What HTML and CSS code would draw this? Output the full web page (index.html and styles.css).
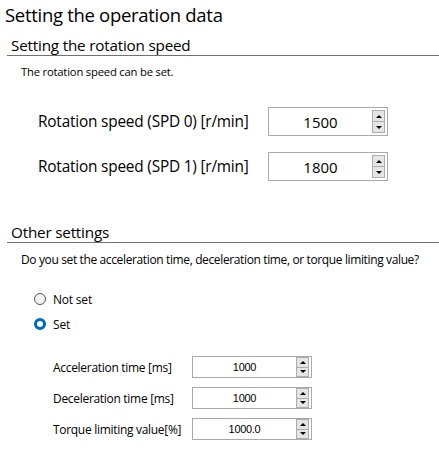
FILE: index.html
```html
<!DOCTYPE html>
<html>
<head>
<meta charset="utf-8">
<link rel="stylesheet" href="styles.css">
</head>
<body>
<div class="page">
  <h1 class="title">Setting the operation data</h1>

  <section class="group">
    <h2 class="group-title">Setting the rotation speed</h2>
    <p class="desc">The rotation speed can be set.</p>
    <div class="speed-grid">
      <span class="speed-label">Rotation speed (SPD 0) [r/min]</span>
      <div class="spin spin-lg">
        <span class="spin-value">1500</span>
        <span class="spin-btns"><span class="spin-btn up"></span><span class="spin-btn down"></span></span>
      </div>
      <span class="speed-label">Rotation speed (SPD 1) [r/min]</span>
      <div class="spin spin-lg">
        <span class="spin-value">1800</span>
        <span class="spin-btns"><span class="spin-btn up"></span><span class="spin-btn down"></span></span>
      </div>
    </div>
  </section>

  <section class="group group-other">
    <h2 class="group-title">Other settings</h2>
    <p class="question">Do you set the acceleration time, deceleration time, or torque limiting value?</p>
    <div class="radios">
      <label class="radio"><span class="radio-dot"></span>Not set</label>
      <label class="radio"><span class="radio-dot checked"></span>Set</label>
    </div>
    <div class="detail-grid">
      <span class="detail-label">Acceleration time [ms]</span>
      <div class="spin spin-sm">
        <span class="spin-value">1000</span>
        <span class="spin-btns"><span class="spin-btn up"></span><span class="spin-btn down"></span></span>
      </div>
      <span class="detail-label">Deceleration time [ms]</span>
      <div class="spin spin-sm">
        <span class="spin-value">1000</span>
        <span class="spin-btns"><span class="spin-btn up"></span><span class="spin-btn down"></span></span>
      </div>
      <span class="detail-label">Torque limiting value[%]</span>
      <div class="spin spin-sm">
        <span class="spin-value">1000.0</span>
        <span class="spin-btns"><span class="spin-btn up"></span><span class="spin-btn down"></span></span>
      </div>
    </div>
  </section>
</div>
</body>
</html>
```

FILE: styles.css
```css
* { box-sizing: border-box; }
html, body { margin: 0; padding: 0; background: #fff; }
body {
  font-family: "Open Sans", "Noto Sans", sans-serif;
  color: #000;
  width: 439px;
  height: 469px;
  overflow: hidden;
}
.page { padding: 0; }

.title {
  margin: 0;
  padding: 3px 0 0 5px;
  height: 28px;
  font-size: 18.5px;
  font-weight: 400;
  line-height: 24px;
  letter-spacing: -0.3px;
}

.group-title {
  margin: 0 0 0 7px;
  padding: 7px 0 0 4px;
  font-size: 15.25px;
  font-weight: 400;
  line-height: 20px;
  height: 28px;
  border-bottom: 1px solid #707070;
  letter-spacing: -0.2px;
}

.desc {
  margin: 0;
  padding: 8px 0 0 21px;
  font-size: 11.25px;
  line-height: 16px;
  letter-spacing: -0.2px;
}

.speed-grid {
  display: grid;
  grid-template-columns: 230px 120px;
  row-gap: 16px;
  padding: 27px 0 0 38px;
  align-items: center;
}
.speed-label {
  font-size: 15.4px;
  letter-spacing: -0.2px;
}

.spin {
  display: flex;
  align-items: center;
  border: 1px solid #a9a9a9;
  background: #fff;
}
.spin-lg { height: 29px; }
.spin-sm { height: 22px; }
.spin-value {
  flex: 1;
  text-align: center;
}
.spin-lg .spin-value {
  font-size: 15px;
  font-family: "Open Sans", sans-serif;
}
.spin-sm .spin-value {
  font-size: 11px;
  font-family: "Liberation Sans", Arial, sans-serif;
  letter-spacing: -0.3px;
}
.spin-btns {
  display: flex;
  flex-direction: column;
  width: 13px;
  margin-right: 2px;
}
.spin-lg .spin-btns { height: 23px; }
.spin-sm .spin-btns { height: 20px; }
.spin-btn {
  flex: 1;
  background: #e5e5e5;
  border: 1px solid #adadad;
  display: flex;
  align-items: center;
  justify-content: center;
}
.spin-btn + .spin-btn { border-top: none; }
.spin-btn::after {
  content: "";
  width: 0;
  height: 0;
  border-left: 3px solid transparent;
  border-right: 3px solid transparent;
}
.spin-btn.up::after { border-bottom: 3px solid #000; }
.spin-btn.down::after { border-top: 3px solid #000; }

.group-other { margin-top: 36px; }
.group-other .group-title { height: 26px; padding-top: 5px; }

.question {
  margin: 0;
  padding: 8px 0 0 21px;
  font-size: 12px;
  line-height: 17px;
  letter-spacing: -0.37px;
}

.radios {
  display: flex;
  flex-direction: column;
  gap: 7px;
  padding: 22px 0 0 34px;
}
.radio {
  display: flex;
  align-items: center;
  gap: 7px;
  height: 18px;
  font-size: 12px;
  letter-spacing: -0.2px;
}
.radio-dot {
  width: 12px;
  height: 12px;
  border-radius: 50%;
  border: 1px solid #555;
  background: #f3f3f3;
}
.radio-dot.checked {
  border: 3.5px solid #0067c0;
  background: #fff;
}

.detail-grid {
  display: grid;
  grid-template-columns: 139px 120px;
  row-gap: 9px;
  padding: 23px 0 0 53px;
  align-items: center;
}
.detail-label {
  font-size: 12px;
  letter-spacing: -0.3px;
}
```
